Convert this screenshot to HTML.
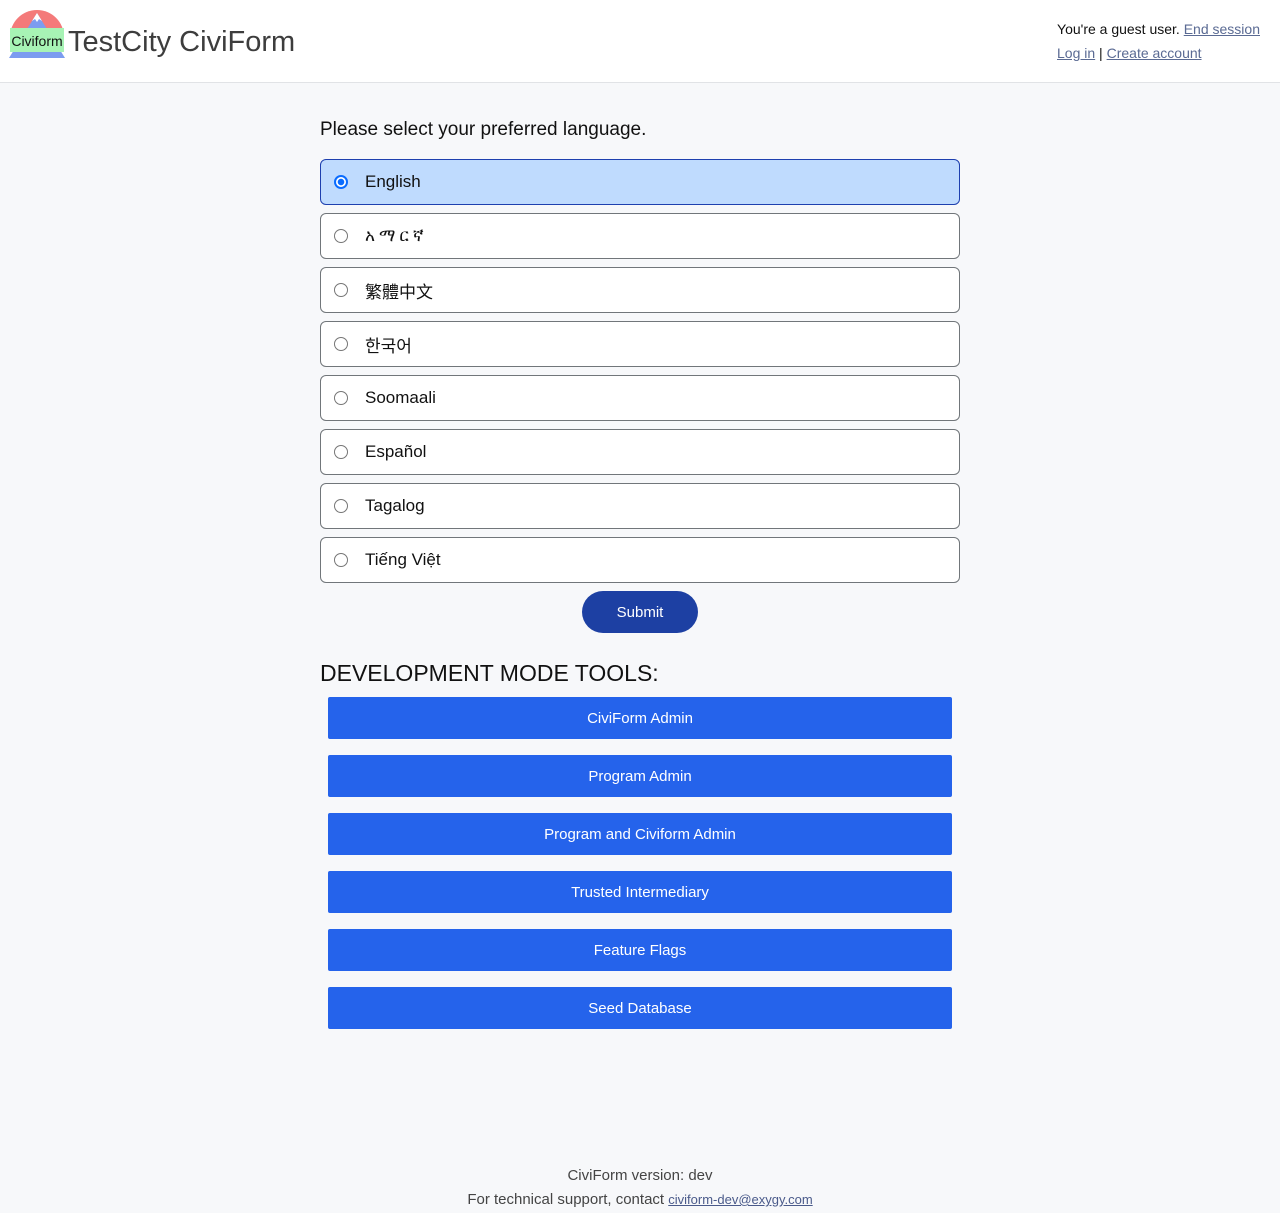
<!DOCTYPE html>
<html><head><meta charset="utf-8"><style>
body{margin:0;background:#f7f8fa;font-family:"Liberation Sans","Noto Sans CJK KR",sans-serif;color:#111;}
header{height:82px;background:#fff;border-bottom:1px solid #e1e3e6;position:relative;}
.logo{position:absolute;left:8px;top:7px;width:58px;height:52px;}
.title{position:absolute;left:68px;top:26px;font-size:29px;color:#3d3d3d;}
.auth{position:absolute;right:20px;top:17px;font-size:14px;line-height:24px;}
.auth a{color:#5a6a93;}
main{width:640px;margin:0 auto;padding-top:36px;}
h2{font-size:19px;font-weight:normal;margin:0 0 18px;}
.opt{height:44px;border:1px solid #71767a;border-radius:6px;background:#fff;margin-bottom:8px;display:flex;align-items:center;font-size:17px;font-family:"Liberation Sans","Noto Sans CJK TC",sans-serif;}
.opt.sel{background:#bfdbfe;border-color:#1e40af;}
.rad{width:14px;height:14px;border:1px solid #767676;border-radius:50%;background:#fff;margin:0 17px 0 13px;box-sizing:border-box;}
.sel .rad{border:2px solid #0a6cff;background:radial-gradient(#0a6cff 3px,#fff 3.5px);}
.sub{display:block;margin:0 auto;width:116px;height:42px;border:0;border-radius:21px;background:#1d40a3;color:#fff;font-size:15px;font-family:inherit;}
h3{font-size:23px;font-weight:normal;margin:27px 0 10px;}
.dev{margin:0 8px 16px;height:42px;background:#2563eb;color:#fff;font-size:15px;display:flex;align-items:center;justify-content:center;border-radius:2px;}
footer{position:absolute;top:1164px;width:100%;text-align:center;font-size:15px;color:#444;line-height:24px;}
footer a{color:#4a5a8a;font-size:13px;}
.am{letter-spacing:4px;font-weight:normal;}
</style></head><body>
<header>
<svg class="logo" viewBox="0 0 58 52">
<path d="M2 30 A27 27 0 0 1 56 30 Z" fill="#f47a7a"/>
<path d="M1 51 L29 6 L57 51 Z" fill="#7c9cf0"/>
<path d="M24 14 L29 6 L34 14 L31 12 L29 15 L27 12 Z" fill="#fff"/>
<rect x="2" y="21" width="54" height="24" fill="#a7f3b5"/>
<text x="29" y="39" font-size="14" text-anchor="middle" font-family="Liberation Sans" fill="#111">Civiform</text>
</svg>
<div class="title">TestCity CiviForm</div>
<div class="auth">You're a guest user. <a href="#">End session</a><br><a href="#">Log in</a> | <a href="#">Create account</a></div>
</header>
<main>
<h2>Please select your preferred language.</h2>
<div class="opt sel"><span class="rad"></span>English</div>
<div class="opt"><span class="rad"></span><span class="am">አማርኛ</span></div>
<div class="opt"><span class="rad"></span>繁體中文</div>
<div class="opt"><span class="rad"></span>한국어</div>
<div class="opt"><span class="rad"></span>Soomaali</div>
<div class="opt"><span class="rad"></span>Español</div>
<div class="opt"><span class="rad"></span>Tagalog</div>
<div class="opt"><span class="rad"></span>Tiếng Việt</div>
<button class="sub">Submit</button>
<h3>DEVELOPMENT MODE TOOLS:</h3>
<div class="dev">CiviForm Admin</div>
<div class="dev">Program Admin</div>
<div class="dev">Program and Civiform Admin</div>
<div class="dev">Trusted Intermediary</div>
<div class="dev">Feature Flags</div>
<div class="dev">Seed Database</div>
</main>
<footer>CiviForm version: dev<br>For technical support, contact <a href="#">civiform-dev@exygy.com</a></footer>
</body></html>
